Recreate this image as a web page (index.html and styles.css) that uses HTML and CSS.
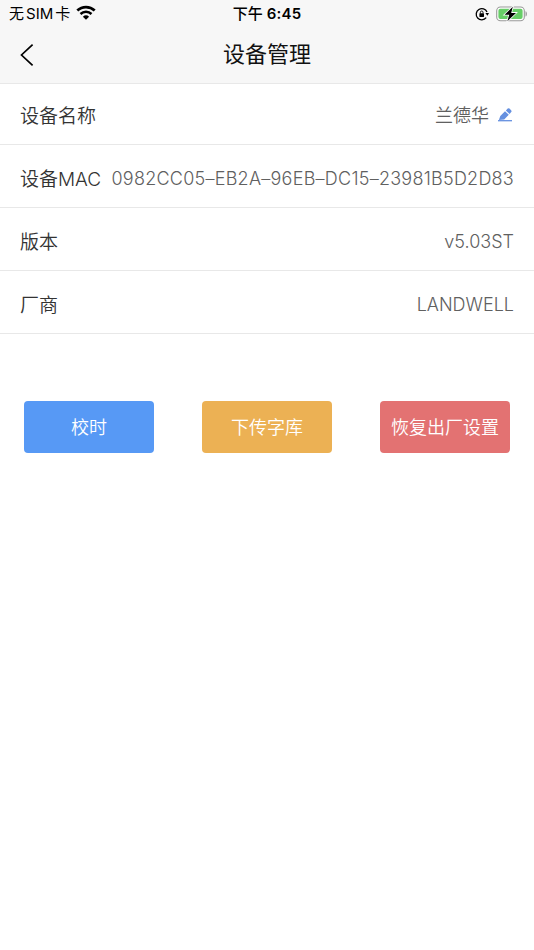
FILE: index.html
```html
<!DOCTYPE html>
<html lang="zh-CN">
<head>
  <meta charset="UTF-8" />
  <title>设备管理</title>
  <meta name="viewport" content="width=device-width, initial-scale=1.0" />
  <link rel="stylesheet" href="styles.css">
</head>
<body>

  <header class="header">
    <div class="status-bar">
      <div class="status-left">
        <span class="carrier">无<span class="sim">SIM</span>卡</span>
        <svg class="wifi" viewBox="0 0 20 15" width="20" height="15">
          <path d="M1.3 5.6a12.6 12.6 0 0 1 17.4 0" fill="none" stroke="#000" stroke-width="2.7" />
          <path d="M4.5 9a8 8 0 0 1 11 0" fill="none" stroke="#000" stroke-width="2.5" />
          <path d="M6.9 11.7a4.5 4.5 0 0 1 6.2 0L10 14.8z" />
        </svg>
      </div>
      <div class="clock">下午<span class="time">6:45</span></div>
      <div class="status-right">
        <svg class="lock" viewBox="0 0 14 14" width="14" height="14">
          <path d="M12 5.1A5.6 5.6 0 1 0 11.2 10.7" fill="none" stroke="#000" stroke-width="1.3" />
          <path d="M10.4 6h3.6l-1.6 2.8z" />
          <rect x="4.4" y="6.3" width="4.6" height="3.6" rx=".4" />
          <path d="M5.4 6.5V5.3a1.3 1.3 0 0 1 2.6 0v1.2" fill="none" stroke="#000" stroke-width=".9" />
        </svg>
        <svg class="battery" viewBox="0 0 32 16" width="32" height="16">
          <rect x=".7" y="1" width="27.6" height="13.8" rx="3.8" fill="#fff" stroke="#999" stroke-width="1.1" />
          <rect x="2.4" y="2.8" width="24.2" height="10.2" rx="2" fill="#67ce67" />
          <path d="M29.5 5.2c1.9.4 1.9 5 0 5.4z" fill="#999" />
          <path d="M16.8.8 8.6 8.8h4.6L11.4 15.2l8.6-8.3h-4.8z" stroke="#fff" stroke-width="1.6" paint-order="stroke" />
        </svg>
      </div>
    </div>
    <div class="navbar">
      <svg class="back" viewBox="0 0 14 24" width="14" height="24">
        <path d="M12.6 1.6 1.5 12l11.1 10.4" fill="none" stroke="#000" stroke-width="1.7" />
      </svg>
      <h1 class="title">设备管理</h1>
    </div>
  </header>

  <div class="list">
    <div class="row row-name">
      <span class="label">设备名称</span>
      <span class="value">兰德华</span>
      <svg class="edit" viewBox="0 0 16 16" width="16" height="16">
        <path d="M1.9 13 3.3 8.9 8 4.2l3.8 3.6-4.6 4.7zM8.9 3.4l1.8-1.8q.9-.8 1.8 0l1.6 1.6q.9.9.1 1.8l-1.6 1.9z" fill="#6590e0" />
        <path d="M1 13.7h14" stroke="#6590e0" stroke-width="1.3" />
      </svg>
    </div>
    <div class="row">
      <span class="label">设备MAC</span>
      <span class="value mac">0982CC05–EB2A–96EB–DC15–23981B5D2D83</span>
    </div>
    <div class="row">
      <span class="label">版本</span>
      <span class="value">v5.03ST</span>
    </div>
    <div class="row">
      <span class="label">厂商</span>
      <span class="value">LANDWELL</span>
    </div>
  </div>

  <div class="actions">
    <button class="btn btn-blue">校时</button>
    <button class="btn btn-orange">下传字库</button>
    <button class="btn btn-red">恢复出厂设置</button>
  </div>

</body>
</html>
```

FILE: styles.css
```css
* {
  box-sizing: border-box;
}

body {
  margin: 0;
  background: #fff;
  color: #333;
  font-family: Inter, "Noto Sans CJK SC", sans-serif;
}

.header {
  height: 84px;
  background: #f7f7f7;
  border-bottom: 1px solid #e8e8e8;
}

.status-bar {
  display: grid;
  grid-template-columns: 1fr auto 1fr;
  align-items: center;
  height: 27px;
  padding: 0 6px;
  color: #000;
}

.status-left,
.status-right {
  display: flex;
  align-items: center;
}

.status-left {
  padding-left: 3px;
}

.status-right {
  justify-content: flex-end;
  gap: 7px;
}

.carrier {
  font-size: 15px;
  line-height: 26px;
}

.sim {
  margin: 0 2px;
}

.wifi {
  margin: 0 0 2px 6px;
}

.clock {
  font-size: 15px;
  font-weight: 500;
  line-height: 26px;
}

.time {
  margin-left: 4px;
  font-weight: 600;
  letter-spacing: 0.2px;
}

.navbar {
  display: grid;
  grid-template-columns: 1fr auto 1fr;
  align-items: center;
  height: 56px;
  padding: 0 20px;
}

.title {
  margin: 0;
  padding-bottom: 2px;
  color: #111;
  font-size: 22px;
  font-weight: 400;
  line-height: 52px;
}

.row {
  display: flex;
  align-items: center;
  height: 63px;
  padding: 4px 20px 0;
  border-bottom: 1px solid #e8e8e8;
}

.row-name {
  height: 61px;
  padding-top: 2px;
}

.label {
  padding-bottom: 2px;
  font-size: 19px;
  font-weight: 350;
  white-space: nowrap;
}

.value {
  margin-left: auto;
  color: #606060;
  font-size: 18px;
  font-weight: 350;
  white-space: nowrap;
}

.row-name .value {
  padding-bottom: 2px;
}

.mac {
  letter-spacing: 0.25px;
}

.edit {
  margin: 0 1px 0 8px;
}

.actions {
  display: flex;
  justify-content: space-between;
  padding: 67px 24px 0;
}

.btn {
  width: 130px;
  height: 52px;
  padding: 0 0 3px;
  border: none;
  border-radius: 4px;
  color: #fff;
  font-family: inherit;
  font-size: 18px;
  font-weight: 350;
}

.btn-blue {
  background: #5799f5;
}

.btn-orange {
  background: #ecb154;
}

.btn-red {
  background: #e37272;
}
```
